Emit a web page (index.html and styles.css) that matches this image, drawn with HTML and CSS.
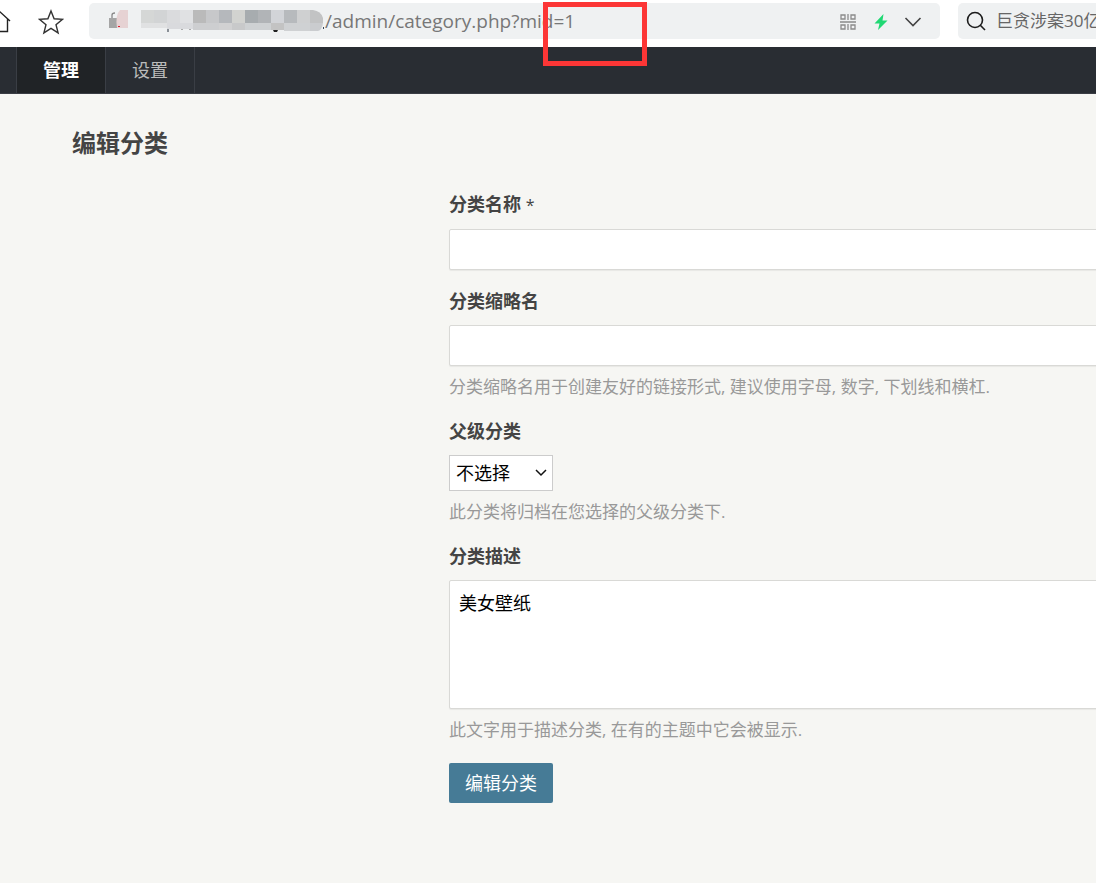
FILE: index.html
```html
<!DOCTYPE html>
<html lang="zh-CN">
<head>
    <meta charset="UTF-8">
    <meta name="viewport" content="width=device-width, initial-scale=1.0">
    <title>编辑分类</title>
    <link rel="stylesheet" href="styles.css">
</head>
<body>
    <!-- Browser toolbar -->
    <div class="toolbar">
        <button class="icon-btn home" type="button" aria-label="主页">
            <svg width="24" height="24" viewBox="0 0 24 24" fill="none" stroke="#222" stroke-width="1.4"><path d="M1 12L12 2l11 10M4 10v12.500h16.500V10"/></svg>
        </button>
        <button class="icon-btn star" type="button" aria-label="收藏">
            <svg width="26" height="26" viewBox="0 0 26 26" fill="none" stroke="#333" stroke-width="1.4"><path d="M13 2l3.100 7.800 8.400.5-6.500 5.400 2.100 8.200-7.100-4.500-7.100 4.500L8 15.700 1.500 10.300l8.400-.5z"/></svg>
        </button>
        <div class="address">
            <svg class="mosaic" width="219" height="36" viewBox="0 0 219 36" aria-hidden="true">
                <path d="M6 15v-3q0-2 3-2" fill="none" stroke="#888" stroke-width="1.300"/>
                <rect x="3" y="15" width="8" height="10" fill="#a5a5a5"/>
                <path d="M14 7h8v18H11q-2-13 3-18z" fill="#e6d2d3"/>
                <rect x="12" y="23" width="2" height="1" fill="#e02030"/>
                <rect x="61" y="26" width="2" height="3" fill="#8a9097"/>
                <rect x="75" y="26" width="2" height="1" fill="#aaa"/>
                <rect x="83" y="26" width="2" height="1" fill="#aaa"/>
                <path d="M167 27h5l-1 2h-3z" fill="#222"/>
                <rect x="217" y="24" width="1" height="2" fill="#345"/>
                <rect x="35" y="7" width="13" height="13" fill="#d5d7d6"/>
                <rect x="48" y="7" width="13" height="13" fill="#d2d4d5"/>
                <rect x="61" y="7" width="13" height="13" fill="#dadbdd"/>
                <rect x="74" y="7" width="13" height="13" fill="#e0e1e3"/>
                <rect x="87" y="7" width="13" height="13" fill="#bababa"/>
                <rect x="100" y="7" width="13" height="13" fill="#c7c8ca"/>
                <rect x="113" y="7" width="13" height="13" fill="#b5b8bc"/>
                <rect x="126" y="7" width="13" height="13" fill="#d2d3d0"/>
                <rect x="139" y="7" width="13" height="13" fill="#a7acaf"/>
                <rect x="152" y="7" width="13" height="13" fill="#b1b4b7"/>
                <rect x="165" y="7" width="13" height="13" fill="#d2d4d8"/>
                <rect x="178" y="7" width="13" height="13" fill="#b7babd"/>
                <rect x="191" y="7" width="13" height="13" fill="#cfd0d1"/>
                <path d="M204 7h3q8 1 10 8v5h-13z" fill="#c2c3c4"/>
                <rect x="35" y="20" width="26" height="5" fill="#e0e1e2"/>
                <rect x="61" y="20" width="26" height="6" fill="#d9dadd"/>
                <rect x="87" y="20" width="26" height="7" fill="#cdced0"/>
                <rect x="113" y="20" width="13" height="7" fill="#d1d1d2"/>
                <rect x="126" y="20" width="13" height="7" fill="#c8c9ca"/>
                <rect x="139" y="20" width="26" height="7" fill="#ced1d3"/>
                <rect x="165" y="20" width="13" height="7" fill="#c3c3c3"/>
                <rect x="178" y="20" width="26" height="8" fill="#cfd1d3"/>
                <path d="M204 20h13q-1 7-5 8h-8z" fill="#cacccf"/>
            </svg>
            <input class="url" type="text" aria-label="地址" value="/admin/category.php?mid=1">
            <div class="address-icons">
                <button class="icon-btn" type="button" aria-label="二维码">
                    <svg width="16" height="16" viewBox="0 0 16 16" fill="none" stroke="#8b8b8b" stroke-width="1.300"><path d="M1 1h4v4H1zM11 1h4v4h-4zM1 11h4v4H1zM11 11h4v4h-4zM8 0v6M8 10v6M0 8h16"/></svg>
                </button>
                <button class="icon-btn" type="button" aria-label="极速模式">
                    <svg width="16" height="18" viewBox="0 0 16 18" fill="#1fd873"><path d="M11.500 1L2.500 10.500H7.500L6 17 15.500 7.500H10.500z"/></svg>
                </button>
                <button class="icon-btn" type="button" aria-label="展开">
                    <svg width="18" height="18" viewBox="0 0 18 18" fill="none" stroke="#444" stroke-width="1.600"><path d="M1.500 5L9 12.500 16.500 5"/></svg>
                </button>
            </div>
        </div>
        <div class="search">
            <svg width="20" height="20" viewBox="0 0 20 20" fill="none" stroke="#1c1c1c" stroke-width="1.600"><circle cx="9" cy="9" r="7.500"/><path d="M14.300 14.300L19 19"/></svg>
            <input type="text" aria-label="搜索" value="巨贪涉案30亿">
        </div>
        <div class="highlight"></div>
    </div>

    <nav class="nav">
        <a class="current" href="#">管理</a>
        <a href="#">设置</a>
    </nav>

    <main class="main">
        <h2>编辑分类</h2>
        <form class="form">
            <div class="field">
                <label for="name">分类名称 <span class="required">*</span></label>
                <input id="name" class="text" type="text">
            </div>
            <div class="field">
                <label for="slug">分类缩略名</label>
                <input id="slug" class="text" type="text">
                <p class="description">分类缩略名用于创建友好的链接形式, 建议使用字母, 数字, 下划线和横杠.</p>
            </div>
            <div class="field">
                <label for="parent">父级分类</label>
                <select id="parent">
                    <option>不选择</option>
                </select>
                <p class="description">此分类将归档在您选择的父级分类下.</p>
            </div>
            <div class="field">
                <label for="description">分类描述</label>
                <textarea id="description">美女壁纸</textarea>
                <p class="description">此文字用于描述分类, 在有的主题中它会被显示.</p>
            </div>
            <button class="primary" type="button">编辑分类</button>
        </form>
    </main>
</body>
</html>
```

FILE: styles.css
```css
* {
    box-sizing: border-box;
}
body {
    margin: 0;
    background-color: #f6f6f3;
    color: #444;
    font-family: "Open Sans", "Noto Sans CJK SC", sans-serif;
    font-size: 18px;
    line-height: 24px;
    overflow-x: hidden;
}
input, select, textarea, button {
    font: inherit;
}

/* Browser toolbar */
.toolbar {
    position: relative;
    display: flex;
    height: 47px;
    padding: 3px 0 8px;
    background-color: #fff;
    overflow-x: clip;
}
.icon-btn {
    display: flex;
    align-items: center;
    padding: 0;
    border: none;
    background: none;
}
.home {
    margin-left: -13px;
}
.star {
    margin: 2px 25px 0 27px;
}
.address {
    display: flex;
    flex: 1;
    align-items: center;
    margin-right: 18px;
    padding: 0 18px 0 17px;
    border-radius: 5px;
    background-color: #eff1f2;
}
.mosaic {
    flex: none;
}
.url {
    flex: 1;
    min-width: 0;
    padding: 0;
    border: none;
    background: none;
    color: #777;
    font-size: 19px;
}
.address-icons {
    display: flex;
    gap: 16px;
    padding-top: 1px;
}
.search {
    display: flex;
    flex: none;
    align-items: center;
    gap: 10px;
    width: 138px;
    padding-left: 8px;
    border-radius: 5px 0 0 5px;
    background-color: #eff1f2;
}
.search svg {
    flex: none;
}
.search input {
    width: 110px;
    padding: 0;
    border: none;
    background: none;
    color: #666;
    font-size: 17px;
}
.highlight {
    position: absolute;
    top: 2px;
    left: 543px;
    width: 104px;
    height: 64px;
    border: 5px solid #fc3636;
    pointer-events: none;
}

/* Admin menu */
.nav {
    display: flex;
    height: 47px;
    padding-left: 16px;
    background-color: #292d33;
    border-bottom: 1px solid #3a3d44;
}
.nav a {
    padding: 11px 26px;
    border-right: 1px solid #3a3e45;
    color: #bbb;
    text-decoration: none;
}
.nav .current {
    border-left: 1px solid #3a3e45;
    background-color: #202326;
    color: #fff;
    font-weight: bold;
}

/* Edit form */
.main {
    padding: 34px 0 80px 72px;
}
h2 {
    margin: 0;
    font-size: 24px;
    line-height: 30px;
}
.form {
    margin: 35px -16px 0 377px;
}
.field {
    display: flex;
    flex-direction: column;
    align-items: flex-start;
    margin-bottom: 20px;
}
label {
    margin-bottom: 12px;
    font-weight: bold;
    line-height: 23px;
}
.required {
    font-weight: normal;
    font-size: 16px;
}
.text, textarea {
    width: 100%;
    padding: 8px 9px;
    border: 1px solid #d9d9d6;
    border-radius: 2px;
    background-color: #fff;
    box-shadow: 0 1px 1px rgba(0, 0, 0, 0.06);
    color: #000;
}
.text {
    height: 41px;
}
textarea {
    display: block;
    height: 129px;
    padding-top: 10px;
    resize: none;
}
select {
    appearance: none;
    width: 104px;
    height: 36px;
    padding: 0 6px;
    border: 1px solid #ccc;
    border-radius: 0;
    background: #fff url("data:image/svg+xml,%3Csvg xmlns='http://www.w3.org/2000/svg' width='12' height='8' fill='none' stroke='%23111' stroke-width='1.5'%3E%3Cpath d='M1 1l5 5 5-5'/%3E%3C/svg%3E") no-repeat right 5px center;
    color: #000;
}
.description {
    margin: 9px 0 2px;
    color: #999;
    font-size: 17px;
    line-height: 23px;
}
.primary {
    width: 104px;
    height: 40px;
    padding: 0;
    border: none;
    border-radius: 2px;
    background-color: #467b96;
    color: #fff;
}
```
